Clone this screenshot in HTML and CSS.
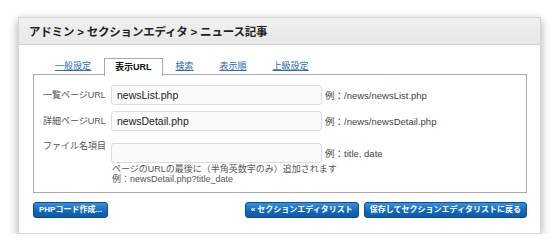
FILE: index.html
```html
<!DOCTYPE html>
<html lang="ja">
<head>
    <meta charset="UTF-8">
    <title>ニュース記事</title>
    <link rel="stylesheet" href="styles.css">
</head>
<body>
    <div class="panel">
        <div class="header">アドミン &gt; セクションエディタ &gt; ニュース記事</div>
        <div class="content">
            <div class="tabs">
                <a href="#" class="tab">一般設定</a>
                <span class="tab active">表示URL</span>
                <a href="#" class="tab">検索</a>
                <a href="#" class="tab">表示順</a>
                <a href="#" class="tab">上級設定</a>
            </div>
            <div class="box">
                <div class="row">
                    <label>一覧ページURL</label>
                    <input type="text" value="newsList.php">
                    <span class="ex">例：/news/newsList.php</span>
                </div>
                <div class="row">
                    <label>詳細ページURL</label>
                    <input type="text" value="newsDetail.php">
                    <span class="ex">例：/news/newsDetail.php</span>
                </div>
                <div class="row row-file">
                    <label>ファイル名項目</label>
                    <div class="field">
                        <div class="line">
                            <input type="text" value="">
                            <span class="ex">例：title, date</span>
                        </div>
                        <p class="hint">ページのURLの最後に（半角英数字のみ）追加されます<br>例：newsDetail.php?title_date</p>
                    </div>
                </div>
            </div>
            <div class="actions">
                <button class="btn">PHPコード作成...</button>
                <div class="right">
                    <button class="btn">« セクションエディタリスト</button>
                    <button class="btn">保存してセクションエディタリストに戻る</button>
                </div>
            </div>
        </div>
    </div>
</body>
</html>
```

FILE: styles.css
```css
body {
    margin: 0;
    padding: 17px 0 0 18px;
    background: #fff;
    font-family: "Liberation Sans", "Noto Sans CJK JP", sans-serif;
}
.panel {
    width: 521px;
    border: 1px solid #d6d6d6;
    background: #fff;
    box-shadow: 0 3px 9px rgba(0, 0, 0, 0.35);
}
.header {
    height: 26px;
    line-height: 28px;
    padding-left: 10px;
    background: linear-gradient(#f0f0f0, #e8e8e8);
    border-bottom: 1px solid #d0d0d0;
    font-size: 11.5px;
    font-weight: bold;
    color: #222;
    letter-spacing: -0.2px;
}
.content {
    padding: 13px 13px 15px 14px;
}
.tabs {
    display: flex;
    margin-left: 9px;
    height: 16px;
    position: relative;
    z-index: 1;
}
.tab {
    padding: 0 13px;
    font-size: 9px;
    line-height: 16px;
    color: #2f6cb3;
    text-decoration: underline;
}
.tab.active {
    color: #111;
    font-weight: bold;
    text-decoration: none;
    background: #fff;
    border: 1px solid #aaa;
    border-bottom: none;
    padding: 0 10px;
    height: 17px;
}
.box {
    border: 1px solid #aaa;
    padding: 10px 9px 8px 9px;
}
.row {
    display: flex;
    align-items: center;
    margin-bottom: 6px;
}
.row label {
    width: 68px;
    flex-shrink: 0;
    font-size: 9px;
    color: #555;
    line-height: 12px;
}
input {
    width: 211px;
    height: 20px;
    box-sizing: border-box;
    border: 1px solid #ddd;
    border-radius: 3px;
    background: #fbfbfb;
    padding: 0 5px;
    font-family: "Liberation Sans", sans-serif;
    font-size: 10.5px;
    color: #222;
    margin: 0;
}
.ex {
    margin-left: 3px;
    font-size: 9.5px;
    color: #444;
}
.row-file {
    align-items: flex-start;
    margin-top: 9px;
    margin-bottom: 0;
}
.line {
    display: flex;
    align-items: center;
    margin-top: 3px;
}
.hint {
    margin: 2px 0 0 1px;
    font-size: 9px;
    line-height: 9.5px;
    color: #555;
}
.actions {
    display: flex;
    justify-content: space-between;
    margin-top: 9px;
}
.right {
    display: flex;
    gap: 5px;
}
.btn {
    height: 16px;
    padding: 0 5px;
    border: 1px solid #0a4f94;
    border-radius: 3px;
    background: linear-gradient(#3c8fdb, #1468bb 55%, #0b5aa8);
    color: #fff;
    font-family: "Liberation Sans", "Noto Sans CJK JP", sans-serif;
    font-size: 8px;
    font-weight: bold;
    line-height: 14px;
}
```
